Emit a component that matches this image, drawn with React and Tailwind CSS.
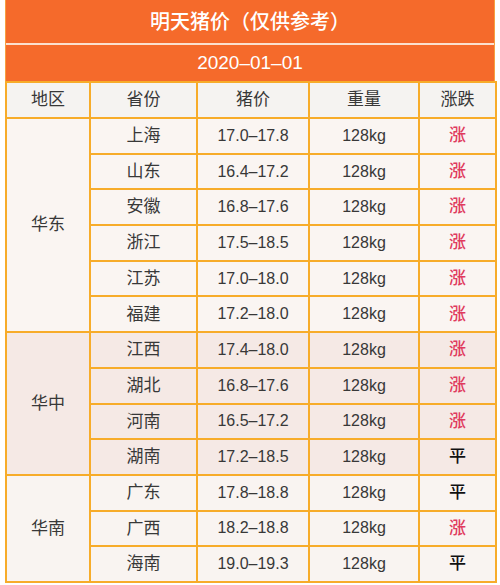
const groups = [
  {
    region: "华东",
    bg: "bg-[#faf5f2]",
    rows: [
      ["上海", "17.0–17.8", "涨"],
      ["山东", "16.4–17.2", "涨"],
      ["安徽", "16.8–17.6", "涨"],
      ["浙江", "17.5–18.5", "涨"],
      ["江苏", "17.0–18.0", "涨"],
      ["福建", "17.2–18.0", "涨"],
    ],
  },
  {
    region: "华中",
    bg: "bg-[#f5e9e5]",
    rows: [
      ["江西", "17.4–18.0", "涨"],
      ["湖北", "16.8–17.6", "涨"],
      ["河南", "16.5–17.2", "涨"],
      ["湖南", "17.2–18.5", "平"],
    ],
  },
  {
    region: "华南",
    bg: "bg-[#f9f4f1]",
    rows: [
      ["广东", "17.8–18.8", "平"],
      ["广西", "18.2–18.8", "涨"],
      ["海南", "19.0–19.3", "平"],
    ],
  },
];

const cell = "border-2 border-[#f7ac2a] text-center align-middle";

export default function App() {
  return (
    <div
      className="w-[500px] h-[585px] overflow-hidden bg-white px-[5px] text-[#383838]"
      style={{ fontFamily: '"Liberation Sans", "Noto Sans CJK SC", sans-serif' }}
    >
      <div className="bg-[#f56a2b] border-x border-[#f7a040]">
        <div className="h-[45px] flex items-center justify-center text-white text-[20px] font-medium border-b-2 border-[#fbe0cf]">
          明天猪价（仅供参考）
        </div>
        <div className="h-[36px] flex items-center justify-center text-white text-[19px]">
          2020–01–01
        </div>
      </div>
      <table className="w-[490px] border-collapse table-fixed">
        <colgroup>
          <col className="w-[84px]" />
          <col className="w-[107px]" />
          <col className="w-[112px]" />
          <col className="w-[110px]" />
          <col className="w-[77px]" />
        </colgroup>
        <thead>
          <tr className="h-[36px] bg-[#f5f3f1] text-[17px]">
            <th className={`${cell} font-normal`}>地区</th>
            <th className={`${cell} font-normal`}>省份</th>
            <th className={`${cell} font-normal`}>猪价</th>
            <th className={`${cell} font-normal`}>重量</th>
            <th className={`${cell} font-normal`}>涨跌</th>
          </tr>
        </thead>
        <tbody>
          {groups.map((g) =>
            g.rows.map((r, i) => (
              <tr key={g.region + r[0]} className={`h-[35.7px] ${g.bg}`}>
                {i === 0 && (
                  <td rowSpan={g.rows.length} className={`${cell} text-[17px]`}>
                    {g.region}
                  </td>
                )}
                <td className={`${cell} text-[17px]`}>{r[0]}</td>
                <td className={`${cell} text-[16px]`}>{r[1]}</td>
                <td className={`${cell} text-[16px]`}>128kg</td>
                <td
                  className={`${cell} text-[17px] font-medium ${
                    r[2] === "涨" ? "text-[#e03a5e]" : "text-[#111111]"
                  }`}
                >
                  {r[2]}
                </td>
              </tr>
            ))
          )}
        </tbody>
      </table>
    </div>
  );
}
